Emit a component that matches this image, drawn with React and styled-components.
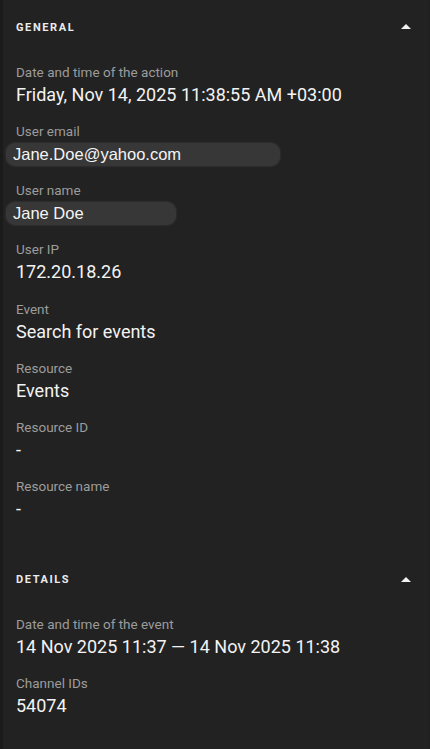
import React from "react";
import styled, { createGlobalStyle } from "styled-components";

const Global = createGlobalStyle`
  html, body { margin: 0; padding: 0; background: #222222; }
  body { font-family: Roboto, "Noto Sans", Arial, sans-serif; }
  * { box-sizing: border-box; }
`;

const Panel = styled.div`
  width: 430px;
  min-height: 749px;
  background: #222222;
  border-left: 3px solid #1b1b1b;
  border-right: 1px solid #1f1f1f;
  color: #f1f1f1;
`;

const Section = styled.section`
  display: flex;
  flex-direction: column;
  padding-bottom: ${(p) => p.$pb || 0}px;
`;

const Header = styled.div`
  height: 53px;
  padding: 1px 11px 0 13px;
  display: flex;
  align-items: center;
  justify-content: space-between;
`;

const HeaderTitle = styled.span`
  font-size: 11px;
  font-weight: 700;
  letter-spacing: 1.6px;
  color: #ececec;
  text-transform: uppercase;
`;

const Caret = styled.svg`
  width: 24px;
  height: 24px;
  display: block;
`;

const Fields = styled.div`
  display: flex;
  flex-direction: column;
  gap: ${(p) => p.$gap}px;
  padding: ${(p) => p.$pt}px 13px 0 13px;
`;

const Field = styled.div`
  display: flex;
  flex-direction: column;
`;

const Label = styled.div`
  font-size: 13.5px;
  line-height: 20px;
  color: #9c9c9c;
`;

const Value = styled.div`
  font-size: 18px;
  line-height: 26px;
  color: #f3f3f3;
`;

const Redacted = styled.div`
  align-self: flex-start;
  width: ${(p) => p.$w}px;
  margin: 2px 0 1px -10px;
  height: 23px;
  padding: 0 7px;
  display: flex;
  align-items: center;
  border-radius: 9px;
  background: #373737;
  box-shadow: 0 0 2px 1px rgba(55, 55, 55, 0.6);
  font-family: "Liberation Sans", Arial, sans-serif;
  font-size: 16.5px;
  color: #f4f4f4;
`;

const ArrowUp = () => (
  <Caret viewBox="0 0 24 24">
    <path d="M7 14l5-5 5 5z" fill="#f2f2f2" />
  </Caret>
);

const general = [
  { label: "Date and time of the action", value: "Friday, Nov 14, 2025 11:38:55 AM +03:00" },
  { label: "User email", value: "Jane.Doe@yahoo.com", redact: 274 },
  { label: "User name", value: "Jane Doe", redact: 170 },
  { label: "User IP", value: "172.20.18.26" },
  { label: "Event", value: "Search for events" },
  { label: "Resource", value: "Events" },
  { label: "Resource ID", value: "-" },
  { label: "Resource name", value: "-" },
];

const details = [
  { label: "Date and time of the event", value: "14 Nov 2025 11:37 \u2014 14 Nov 2025 11:38" },
  { label: "Channel IDs", value: "54074" },
];

const FieldList = ({ items, pt, gap }) => (
  <Fields $pt={pt} $gap={gap}>
    {items.map((f) => (
      <Field key={f.label}>
        <Label>{f.label}</Label>
        {f.redact ? <Redacted $w={f.redact}>{f.value}</Redacted> : <Value>{f.value}</Value>}
      </Field>
    ))}
  </Fields>
);

export default function App() {
  return (
    <>
      <Global />
      <Panel>
        <Section $pb={31}>
          <Header>
            <HeaderTitle>General</HeaderTitle>
            <ArrowUp />
          </Header>
          <FieldList items={general} pt={9} gap={13.15} />
        </Section>
        <Section>
          <Header>
            <HeaderTitle>Details</HeaderTitle>
            <ArrowUp />
          </Header>
          <FieldList items={details} pt={8.5} gap={12.5} />
        </Section>
      </Panel>
    </>
  );
}
